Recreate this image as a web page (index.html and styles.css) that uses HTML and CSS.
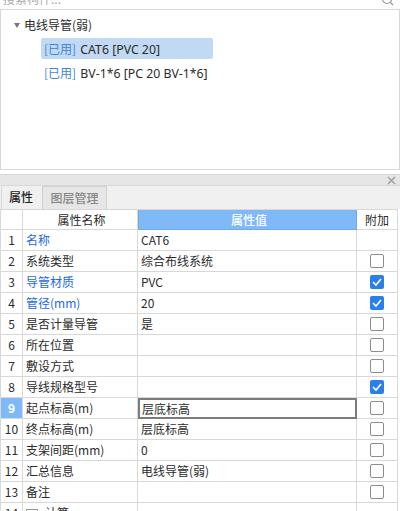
FILE: index.html
```html
<!DOCTYPE html>
<html lang="zh">
<head>
<meta charset="utf-8">
<title>属性</title>
<link rel="stylesheet" href="styles.css">
</head>
<body>
<div class="search"><span class="ph">搜索构件...</span>
<svg class="mag" width="12" height="8" viewBox="0 0 12 8"><circle cx="5" cy="-1" r="4.5" fill="none" stroke="#999" stroke-width="1.2"/><path d="M8 2l3 3" stroke="#999" stroke-width="1.2"/></svg></div>
<div class="tree">
  <div class="root"><span class="caret"></span>电线导管(弱)</div>
  <div class="item sel"><span class="used">[已用]</span> CAT6 [PVC 20]</div>
  <div class="item"><span class="used">[已用]</span> BV-1*6 [PC 20 BV-1*6]</div>
</div>
<div class="titlebar">
<svg width="9" height="9" viewBox="0 0 9 9"><path d="M1 1l7 7M8 1l-7 7" stroke="#999" stroke-width="1.2"/></svg>
</div>
<div class="tabs"><div class="tab on">属性</div><div class="tab">图层管理</div></div>
<div class="grid">
  <div class="row head"><div class="num"></div><div class="name">属性名称</div><div class="val">属性值</div><div class="add">附加</div></div>
  <div class="row"><div class="num">1</div><div class="name blue">名称</div><div class="val">CAT6</div><div class="add"></div></div>
  <div class="row"><div class="num">2</div><div class="name">系统类型</div><div class="val">综合布线系统</div><div class="add"><span class="cb"></span></div></div>
  <div class="row"><div class="num">3</div><div class="name blue">导管材质</div><div class="val">PVC</div><div class="add"><span class="cb ck"><svg width="14" height="14" viewBox="0 0 14 14"><path d="M3 7l3 3 5-6" fill="none" stroke="#fff" stroke-width="1.6"/></svg></span></div></div>
  <div class="row"><div class="num">4</div><div class="name blue">管径(mm)</div><div class="val">20</div><div class="add"><span class="cb ck"><svg width="14" height="14" viewBox="0 0 14 14"><path d="M3 7l3 3 5-6" fill="none" stroke="#fff" stroke-width="1.6"/></svg></span></div></div>
  <div class="row"><div class="num">5</div><div class="name">是否计量导管</div><div class="val">是</div><div class="add"><span class="cb"></span></div></div>
  <div class="row"><div class="num">6</div><div class="name">所在位置</div><div class="val"></div><div class="add"><span class="cb"></span></div></div>
  <div class="row"><div class="num">7</div><div class="name">敷设方式</div><div class="val"></div><div class="add"><span class="cb"></span></div></div>
  <div class="row"><div class="num">8</div><div class="name">导线规格型号</div><div class="val"></div><div class="add"><span class="cb ck"><svg width="14" height="14" viewBox="0 0 14 14"><path d="M3 7l3 3 5-6" fill="none" stroke="#fff" stroke-width="1.6"/></svg></span></div></div>
  <div class="row"><div class="num cur">9</div><div class="name">起点标高(m)</div><div class="val edit">层底标高</div><div class="add"><span class="cb"></span></div></div>
  <div class="row"><div class="num">10</div><div class="name">终点标高(m)</div><div class="val">层底标高</div><div class="add"><span class="cb"></span></div></div>
  <div class="row"><div class="num">11</div><div class="name">支架间距(mm)</div><div class="val">0</div><div class="add"><span class="cb"></span></div></div>
  <div class="row"><div class="num">12</div><div class="name">汇总信息</div><div class="val">电线导管(弱)</div><div class="add"><span class="cb"></span></div></div>
  <div class="row"><div class="num">13</div><div class="name">备注</div><div class="val"></div><div class="add"><span class="cb"></span></div></div>
  <div class="row"><div class="num">14</div><div class="name"><span class="plus">+</span>计算</div><div class="val"></div><div class="add"></div></div>
</div>
</body>
</html>
```
FILE: styles.css
```css
html, body { margin: 0; padding: 0; }
body {
  width: 400px; height: 511px; overflow: hidden; background: #fff;
  font-family: "Noto Sans CJK SC", "Noto Sans", sans-serif; font-size: 12px; color: #2b2b2b;
}
.search { height: 9px; position: relative; overflow: hidden; border-bottom: 1px solid #d8d8d8; }
.ph { position: absolute; left: 3px; top: -10px; color: #aaa; line-height: 18px; }
.mag { position: absolute; left: 382px; top: 0; }
.tree { border: 1px solid #d8d8d8; border-top: 0; padding-top: 4px; box-sizing: border-box; height: 160px; }
.root { height: 21px; line-height: 21px; padding-left: 23px; position: relative; }
.caret { position: absolute; left: 13px; top: 9px; border: 3.5px solid transparent; border-top: 5px solid #777; border-bottom: 0; }
.item { margin-left: 40px; width: 172px; height: 21px; line-height: 21px; padding-left: 3px; box-sizing: border-box; margin-top: 3px; border-radius: 2px; white-space: nowrap; font-family: "Noto Sans", "Noto Sans CJK SC", sans-serif; font-size: 12.3px; }
.sel { background: #c1d9f2; }
.used { color: #3c86dd; font-family: "Noto Sans CJK SC", sans-serif; font-size: 12px; margin-right: 1px; }
.titlebar { margin-top: 4px; height: 10px; background: #e6e6e6; border-top: 1px solid #d8d8d8; border-bottom: 1px solid #d8d8d8; display: flex; justify-content: flex-end; align-items: center; padding-right: 4px; }
.tabs { height: 23px; background: #f0f0f0; display: flex; box-sizing: border-box; padding-left: 1px; }
.tab { width: 41px; height: 23px; line-height: 22px; text-align: center; font-weight: 500; color: #222; border: 1px solid #d8d8d8; border-width: 0 0 0 1px; box-sizing: border-box; padding-right: 2px; }
.tab + .tab { width: 65px; background: #e6e6e6; color: #888; border: 1px solid #d0d0d0; border-bottom: 0; border-left-width: 1px; padding-right: 0; }
.grid { border-top: 1px solid #d8d8d8; width: 398px; box-sizing: border-box; border-right: 1px solid #d8d8d8; border-left: 1px solid #d8d8d8; }
.row { display: grid; grid-template-columns: 22px 115px 219px 40px; height: 21px; line-height: 20px; box-sizing: border-box; }
.row > div { border-bottom: 1px solid #d8d8d8; border-right: 1px solid #d8d8d8; box-sizing: border-box; white-space: nowrap; overflow: hidden; }
.row > .add { border-right: 0; display: flex; align-items: center; justify-content: center; }
.head { height: 20px; }
.head .name { text-align: center; }
.head .val { background: #7fb9f8; color: #fff; text-align: center; font-weight: 500; border: 1px solid #6fa9e8; border-top: 0; }
.num { text-align: center; }
.name, .val { padding-left: 3px; }
.blue { color: #2468e6; }
.cur { background: #7fb9f8; color: #fff; font-weight: 700; }
.row > .edit { border: 2px solid #7c7c7c; line-height: 17px; padding-left: 2px; }
.cb { width: 14px; height: 14px; box-sizing: border-box; border: 1px solid #8c8c8c; border-radius: 2px; display: block; background: #fff; }
.ck { background: #2b7fe8; border: 0; }
.ck svg { display: block; }
.plus { display: inline-block; width: 12px; height: 12px; line-height: 10px; border: 1px solid #999; text-align: center; margin-right: 7px; box-sizing: border-box; font-size: 10px; vertical-align: middle; }
```
